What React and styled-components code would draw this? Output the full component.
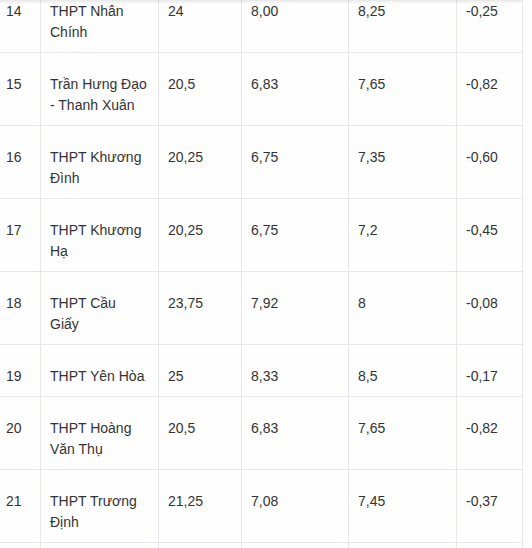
import styled, { createGlobalStyle } from 'styled-components';

const GlobalStyle = createGlobalStyle`
	html, body {
		margin: 0;
		padding: 0;
		background: #fefefe;
		overflow: hidden;
	}
`;

const Page = styled.div`
	position: relative;
	width: 532px;
	height: 548px;
	overflow: hidden;
	font-family: 'Liberation Sans', Arial, sans-serif;
	font-size: 14px;
	color: #333;
`;

const TopShade = styled.div`
	position: absolute;
	top: 0;
	left: 0;
	right: 10px;
	height: 4px;
	background: linear-gradient(rgba(0, 0, 0, 0.09), rgba(0, 0, 0, 0));
`;

const Table = styled.table`
	border-collapse: collapse;
	table-layout: fixed;
	width: 527px;
	margin: -21px 0 0 -4px;
`;

const Cell = styled.td`
	border: 1px solid #e6e5eb;
	padding: 21px 10px 9px 9px;
	line-height: 21px;
	vertical-align: top;
	text-align: left;
	word-wrap: break-word;
`;

const widths = [44, 118, 83, 107, 108, 66];

const rows = [
	['14', 'THPT Nhân Chính', '24', '8,00', '8,25', '-0,25'],
	['15', 'Trần Hưng Đạo - Thanh Xuân', '20,5', '6,83', '7,65', '-0,82'],
	['16', 'THPT Khương Đình', '20,25', '6,75', '7,35', '-0,60'],
	['17', 'THPT Khương Hạ', '20,25', '6,75', '7,2', '-0,45'],
	['18', 'THPT Cầu Giấy', '23,75', '7,92', '8', '-0,08'],
	['19', 'THPT Yên Hòa', '25', '8,33', '8,5', '-0,17'],
	['20', 'THPT Hoàng Văn Thụ', '20,5', '6,83', '7,65', '-0,82'],
	['21', 'THPT Trương Định', '21,25', '7,08', '7,45', '-0,37'],
	['22', 'THPT Việt Đức', '24', '8,00', '8,1', '-0,10'],
];

const App = () => {
	return (
		<Page>
			<GlobalStyle />
			<Table>
				<colgroup>
					{widths.map((w, i) => (
						<col key={i} style={{ width: w }} />
					))}
				</colgroup>
				<tbody>
					{rows.map((row) => (
						<tr key={row[0]}>
							{row.map((value, i) => (
								<Cell key={i}>{value}</Cell>
							))}
						</tr>
					))}
				</tbody>
			</Table>
			<TopShade />
		</Page>
	);
};

export default App;
